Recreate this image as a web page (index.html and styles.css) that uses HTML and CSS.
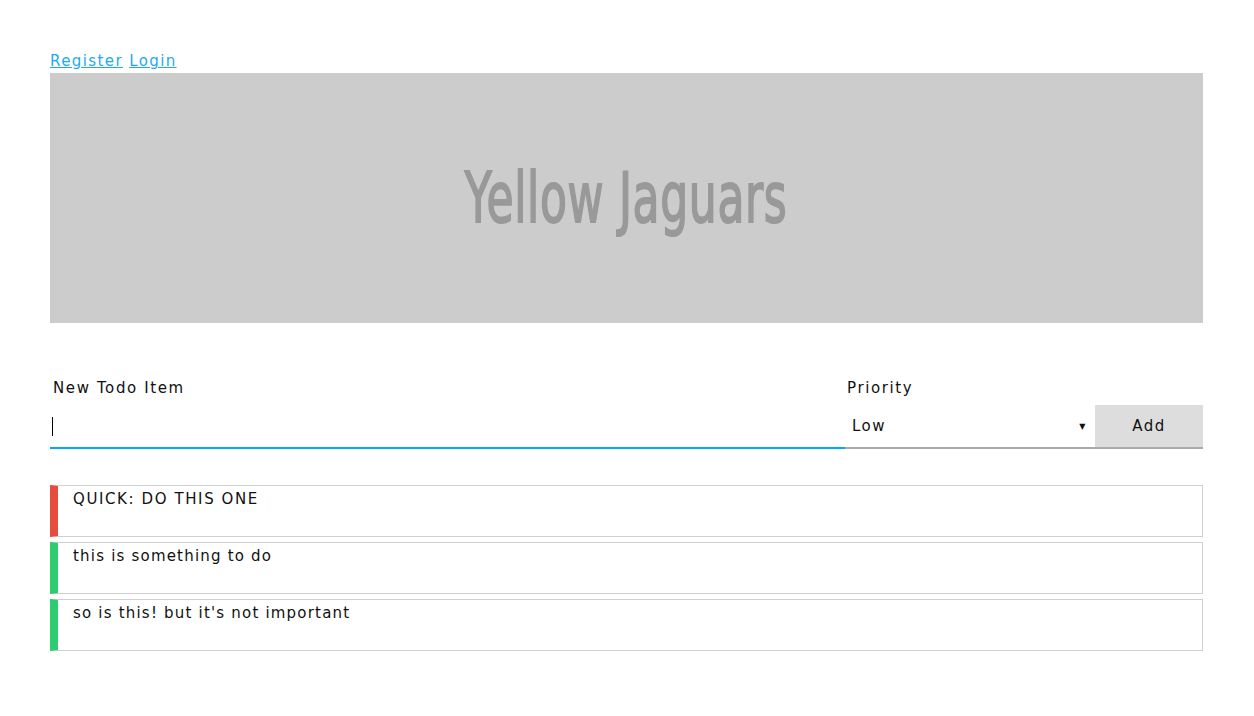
FILE: index.html
```html
<!DOCTYPE html>
<html>
<head>
<meta charset="utf-8">
<link rel="stylesheet" href="styles.css">
</head>
<body>
<div class="page">
  <nav class="auth"><a href="#">Register</a> <a href="#">Login</a></nav>
  <header class="banner"><h1>Yellow Jaguars</h1></header>
  <form class="todo-form">
    <div class="field field-text">
      <label>New Todo Item</label>
      <div class="input"><span class="caret"></span></div>
    </div>
    <div class="field field-select">
      <label>Priority</label>
      <div class="select"><span>Low</span><span class="arrow">▼</span></div>
    </div>
    <button type="button" class="add">Add</button>
  </form>
  <ul class="todos">
    <li class="todo high">QUICK: DO THIS ONE</li>
    <li class="todo low">this is something to do</li>
    <li class="todo low">so is this! but it's not important</li>
  </ul>
</div>
</body>
</html>
```
FILE: styles.css
```css
html, body { margin: 0; padding: 0; background: #fff; }
body { font-family: "DejaVu Sans", sans-serif; color: #111; }
.page { padding: 50px 51px 0 50px; }
.auth { font-size: 15px; line-height: 23px; letter-spacing: 1.4px; }
.auth a { color: #1eaaf1; text-decoration: underline; }
.banner { background: #cccccc; height: 250px; display: flex; align-items: center; justify-content: center; }
.banner h1 { margin: 0; font-family: "DejaVu Sans", sans-serif; font-weight: normal; font-size: 70px; color: #999; -webkit-text-stroke: 2px #999; letter-spacing: 1px; transform: scaleX(0.63); white-space: nowrap; }
.todo-form { display: flex; align-items: flex-end; margin-top: 55px; }
.field { display: flex; flex-direction: column; }
.field label { font-size: 15px; line-height: 20px; letter-spacing: 1.6px; padding-left: 3px; margin-bottom: 7px; }
.field-text { flex: 1; }
.input { height: 42px; border-bottom: 2px solid #03a9f4; display: flex; align-items: center; padding-left: 2px; }
.caret { width: 1px; height: 19px; background: #000; }
.field-select { width: 250px; }
.field-select label { padding-left: 2px; }
.select { height: 42px; border-bottom: 2px solid #aaa; display: flex; align-items: center; justify-content: space-between; padding: 0 8px 0 7px; font-size: 15px; letter-spacing: 1.5px; }
.arrow { font-size: 8px; }
.add { width: 108px; height: 44px; border: 0; border-bottom: 2px solid #aaa; background: #dddddd; font-family: inherit; font-size: 15px; letter-spacing: 1.5px; color: #111; padding: 0; }
.todos { list-style: none; margin: 36px 0 0; padding: 0; display: flex; flex-direction: column; gap: 5px; }
.todo { height: 50px; box-sizing: content-box; border: 1px solid #d0d0d0; border-left: 8px solid; padding: 0 0 0 15px; font-size: 15px; line-height: 26px; letter-spacing: 1.2px; }
.todo.high { border-left-color: #e74c3c; letter-spacing: 1.6px; }
.todo.low { border-left-color: #2ecc71; }
```
